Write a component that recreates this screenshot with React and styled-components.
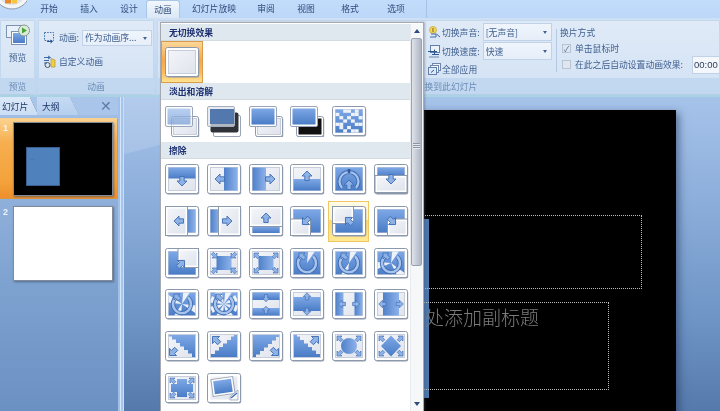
import React from "react";
import styled, { createGlobalStyle } from "styled-components";

const Global = createGlobalStyle`
  html, body { margin: 0; padding: 0; width: 720px; height: 411px; overflow: hidden; background: #8fb0dc; }
  #root { width: 720px; height: 411px; }
  * { box-sizing: border-box; }
`;

const Page = styled.div`
  position: relative; width: 720px; height: 411px; overflow: hidden;
  display: flex; flex-direction: column;
  font-family: "Noto Sans CJK SC", "Liberation Sans", sans-serif;
  font-size: 8.8px; color: #3f5f8f; filter: blur(0.3px); white-space: nowrap;
`;

/* ---------- top tabs ---------- */
const TabBar = styled.div`
  position: relative; height: 18px; flex: none; display: flex; align-items: flex-end;
  padding-left: 31px; background: linear-gradient(#c2dcfb, #bcd7f8);
`;
const TabItem = styled.div`
  height: 18px; width: ${p => p.$w}px; margin-right: ${p => p.$gap || 0}px; display: flex; align-items: center; justify-content: center;
  color: #2f4d7c; padding-bottom: 1px;
  ${p => p.$active && `background: linear-gradient(#f2f7fd, #dbe8f6); border: 1px solid #a9c6e6; border-bottom: 0; border-radius: 3px 3px 0 0;`}
`;
const TabEnd = styled.div`width: 1px; height: 18px; background: #a4c2e6; margin-left: 12px;`;
const OfficeBall = styled.svg`position: absolute; left: 0; top: 0;`;

/* ---------- ribbon ---------- */
const Ribbon = styled.div`
  height: 79px; flex: none; display: flex; gap: 3px; padding: 2px 0 0 0;
  background: linear-gradient(#cfe0f5, #bcd5f0); border-bottom: 2px solid #a9d3e2;
`;
const Group = styled.div`
  width: ${p => p.$w ? p.$w + "px" : "auto"}; flex: ${p => p.$w ? "none" : "1"};
  min-width: 0; display: flex; flex-direction: column; border-radius: 2px; overflow: hidden;
  border: 1px solid #c3d7ee; border-bottom-color: #b5cde8; background: linear-gradient(#e0eaf7, #d2e2f4);
`;
const GroupBody = styled.div`flex: 1; display: flex; min-height: 0;`;
const GroupLabel = styled.div`
  height: 16px; flex: none; display: flex; align-items: center; justify-content: center;
  background: #c2d8f0; color: #6c8cb6; padding-left: ${p => p.$pad || 0}px;
`;
const PreviewButton = styled.div`
  display: flex; flex-direction: column; align-items: center; width: 100%; padding-top: 3px; gap: 3px; color: #3f5f8f;
`;
const AnimColumn = styled.div`display: flex; flex-direction: column; padding: 8px 0 0 4px; gap: 7px;`;
const Row = styled.div`display: flex; align-items: center; gap: ${p => p.$gap || 3}px; height: ${p => p.$h || 17}px;`;
const Select = styled.div`
  width: ${p => p.$w}px; height: ${p => p.$h || 16}px; margin-left: ${p => p.$ml || 0}px; flex: none;
  display: flex; align-items: center; justify-content: space-between;
  padding: 0 4px 0 2px; background: linear-gradient(#f0f5fc, #e6eef9); border: 1px solid #c0d2e8; color: #40608f;
`;
const Caret = styled.span`width: 0; height: 0; border: 2.5px solid transparent; border-top: 3px solid #44628e; margin-top: 3px;`;
const TransitionBody = styled.div`flex: 1; display: flex; padding: 2px 0 0 270px; min-width: 0;`;
const SoundColumn = styled.div`display: flex; flex-direction: column; width: 128px; flex: none; gap: 1px;`;
const WayColumn = styled.div`
  flex: 1; display: flex; flex-direction: column; border-left: 1px solid #b4c9e2; margin: 6px 0 6px 0; padding-left: 3px; min-width: 0;
`;
const WayTitle = styled.div`height: 12px; margin: -3px 0 4px 0; line-height: 13px; color: #3f5f8f;`;
const CheckRow = styled.div`display: flex; align-items: center; gap: 4px; height: 18px; margin-left: 2px; padding-top: ${p => p.$pt || 0}px;`;
const Check = styled.div`
  width: 9px; height: 9px; flex: none; background: #dfe6f0; border: 1px solid #b8c3d2; color: #4f6b96;
  font-size: 8px; line-height: 7px; text-align: center;
`;
const TimeBox = styled.div`
  width: 40px; height: 18px; margin-left: 5px; flex: none; background: #f4f8fd; border: 1px solid #c0d2e8;
  color: #2d3d55; font-family: "Liberation Sans", sans-serif; font-size: 9.5px; display: flex; align-items: center; padding-left: 1px;
`;

/* ---------- workspace ---------- */
const Workspace = styled.div`flex: 1; display: flex; min-height: 0;`;
const SlidePane = styled.div`
  width: 118px; flex: none; background: linear-gradient(#a3c0e6, #7ea2d0 60%, #6b90c2);
`;
const PaneTabs = styled.div`height: 18px; display: flex; align-items: flex-end; background: #a9c5e9; position: relative;`;
const PaneTab = styled.div`
  height: 18px; width: ${p => p.$w}px; margin-right: ${p => p.$gap || 0}px; padding-left: ${p => p.$pad}px; display: flex; align-items: center;
  color: #1d3768;
  background:
    linear-gradient(to top right, transparent calc(50% - .7px), #7f9fc7 50%, transparent calc(50% + .7px)) no-repeat right / 22% 100%,
    ${p => p.$active ? "linear-gradient(#dce9f8,#cbdef4)" : "linear-gradient(#c6daf3,#b5cfee)"};
  clip-path: polygon(0 0, 78% 0, 100% 100%, 0 100%);
`;
const PaneClose = styled.span`position: absolute; right: 6px; top: 1px; font-size: 14px; line-height: 16px; color: #5d7ba6; font-family: "Liberation Sans", sans-serif;`;
const ThumbRow = styled.div`
  display: flex; gap: 5px; padding: ${p => p.$active ? "3px 4px 3px 3px" : "7px 4px 0 3px"}; height: ${p => p.$active ? 81 : 82}px; margin-top: ${p => p.$active ? 3 : 0}px;
  ${p => p.$active && `background: linear-gradient(#fcd28e, #f6ae4e 30%, #f3a23b 80%, #ee8f2c); border: 1px solid #e0963c; border-left: 0; border-top-color:#f9cf8c;`}
`;
const ThumbNo = styled.span`width: 5px; font-size: 9px; font-weight: 700; color: #eef4fc; margin-top: 1px; font-family: "Liberation Sans", sans-serif;`;
const Thumb = styled.div`
  position: relative; width: 100px; height: ${p => p.$h}px; background: ${p => p.$bg};
  border: 1px solid #808a98; box-shadow: 1px 1px 2px rgba(40,60,90,.55);
`;
const ThumbShape = styled.div`
  position: absolute; left: 12px; top: 24px; width: 34px; height: 39px; background: #4f81bd; border: 1px solid #3a5f8e;
  font-size: 5px; line-height: 1; color: #2c4468; padding: 9px 0 0 4px; font-family: "Liberation Sans", sans-serif;
`;
const Splitter = styled.div`
  width: 6px; flex: none; background: linear-gradient(90deg, #9fc0ea 0 2px, #d7e6f8 2px 3px, #a6c5ec 3px 5px, #c9ddf5 5px);
`;
const Stage = styled.div`
  flex: 1; min-width: 0; padding: 13px 0 0 95px; overflow: hidden;
  background:
    linear-gradient(165deg, rgba(255,255,255,.14) 0 12%, rgba(255,255,255,0) 12.2%),
    linear-gradient(#a6c3ea, #8fb0dc 30%, #6e95c6 70%, #5679ab);
`;
const Slide = styled.div`
  position: relative; width: 457px; height: 306px; background: #000; padding-top: 105px;
  box-shadow: 3px 3px 8px rgba(30,50,85,.55);
`;
const TitleBox = styled.div`width: 389px; height: 74px; margin-left: 34px; border: 1px dotted #bdbdbd;`;
const SubBox = styled.div`
  width: 322px; height: 88px; margin: 13px 0 0 68px; border: 1px dotted #bdbdbd; position: relative; padding-top: 1px;
  font-size: 19px; line-height: 26px; font-weight: 300; color: #7b7b7b; text-align: center; letter-spacing: 0;
`;
const SubText = styled.div`margin-left: 11px;`;
const SelectedShape = styled.div`
  position: absolute; left: 55px; top: 109px; width: 155px; height: 179px; background: #4a76ab; z-index: 0;
`;
const SlideLayer = styled.div`position: relative; z-index: 1;`;

/* ---------- gallery ---------- */
const Gallery = styled.div`
  position: absolute; left: 160px; top: 22px; width: 264px; height: 389px; background: #fff; z-index: 5;
  border: 1px solid #a5aab2; border-bottom: 0; display: flex; box-shadow: 1px 0 2px rgba(70,80,100,.4); padding-top: 1px;
`;
const GalleryBody = styled.div`flex: 1; min-width: 0;`;
const SectionHead = styled.div`
  height: 17px; padding-left: 8px; display: flex; align-items: center; background: #dfe8ef; border-bottom: 1px solid #d2dae2;
  font-weight: 700; color: #1c2f70;
`;
const TileGrid = styled.div`display: grid; grid-template-columns: repeat(6, 41.67px); grid-auto-rows: ${p => p.$row || 41.67}px;`;
const TileCell = styled.div`
  display: flex; align-items: center; justify-content: center;
  ${p => p.$mode === "strong" && `background: linear-gradient(#fbd79a, #f7a84a 45%, #fbb95a 75%, #ffe28f); border: 1px solid #d99a4a;`}
  ${p => p.$mode === "soft" && `background: linear-gradient(#fffce8, #fff3c2 45%, #ffd86e 47%, #ffe995); border: 1px solid #efc861;`}
`;
const ScrollBar = styled.div`
  width: 13px; flex: none; display: flex; flex-direction: column; align-items: stretch; background: #f6f7f9; border-left: 1px solid #e8eaee;
  position: relative;
`;
const ScrollArrow = styled.div`
  height: 14px; flex: none; display: flex; align-items: center; justify-content: center;
  &::before { content: ""; width: 0; height: 0; border-left: 3.5px solid transparent; border-right: 3.5px solid transparent;
    ${p => p.$down ? "border-top: 4px solid #2f4c78;" : "border-bottom: 4px solid #2f4c78;"} }
`;
const ScrollThumb = styled.div`
  height: 228px; flex: none; margin: 0 1px 0 0; background: linear-gradient(90deg, #dfe3ea, #c4cad5 55%, #aeb6c4);
  border: 1px solid #9aa3b2; border-radius: 2px; display: flex; align-items: center; justify-content: center; padding-bottom: 12px;
`;
const Grip = styled.div`width: 7px; height: 6px; background: repeating-linear-gradient(#8b95a6 0 1px, #e6e9ef 1px 2px);`;
const Track = styled.div`flex: 1;`;

/* ---------- tile drawing ---------- */
const HiddenDefs = styled.svg`position: absolute; width: 0; height: 0;`;
const TileSvg = styled.svg`display: block; flex: none; margin-left: 2px;`;

const Defs = () => (
  <HiddenDefs aria-hidden="true">
    <defs>
      <linearGradient id="blue" x1="0" y1="0" x2="0" y2="1"><stop offset="0" stopColor="#7ea8e6" /><stop offset="1" stopColor="#4a7cc6" /></linearGradient>
      <linearGradient id="blueH" x1="0" y1="0" x2="1" y2="0"><stop offset="0" stopColor="#4f80c9" /><stop offset="1" stopColor="#8db2ea" /></linearGradient>
      <linearGradient id="pale" x1="0" y1="0" x2="1" y2="1"><stop offset="0" stopColor="#f3f5f9" /><stop offset="1" stopColor="#dfe3ec" /></linearGradient>
      <clipPath id="inner"><rect x="3.5" y="3.5" width="27" height="23" /></clipPath>
    </defs>
  </HiddenDefs>
);

const Frame = ({ x = 0.5, y = 0.5, w = 33, h = 29, fill = "#fff" }) => (
  <>
    <rect x={x + 0.7} y={y + 0.9} width={w} height={h} rx="2" fill="#8b95a8" />
    <rect x={x} y={y} width={w} height={h} rx="2" fill={fill} stroke="#8c98ac" />
  </>
);
const Base = () => (<><Frame /><rect x="3.5" y="3.5" width="27" height="23" fill="url(#pale)" stroke="#c8ced9" /></>);
const B = ({ x, y, w, h, hz }) => <rect x={x} y={y} width={w} height={h} fill={hz ? "url(#blueH)" : "url(#blue)"} />;
const Arrow = ({ x, y, r = 0, s = 1 }) => (
  <path transform={`translate(${x} ${y}) rotate(${r}) scale(${s})`} d="M0-5 L5 0 H2.2 V4.5 H-2.2 V0 H-5Z" fill="#8fb2e6" stroke="#3e6db4" strokeWidth=".9" />
);
const Pn = ({ x, y, w, h }) => (
  <>
    <rect x={x} y={y} width={w} height={h} fill="#fff" stroke="#8c98ac" />
    <rect x={x + 2} y={y + 2} width={w - 4} height={h - 4} fill="url(#pale)" />
  </>
);
const Corners = ({ out }) => {
  const rot = out ? [-45, 45, 135, 225] : [135, 225, -45, 45];
  return (
    <>
      <Arrow x={7.5} y={7.5} r={rot[0]} s=".7" />
      <Arrow x={26.5} y={7.5} r={rot[1]} s=".7" />
      <Arrow x={26.5} y={22.5} r={rot[2]} s=".7" />
      <Arrow x={7.5} y={22.5} r={rot[3]} s=".7" />
    </>
  );
};
const Wheel = ({ n }) => {
  const w = [];
  for (let i = 0; i < n; i++) {
    const a = (i * 360) / n;
    w.push(<path key={i} d="M0 0 L-5 -20 L5 -20Z" fill="#eef2f8" transform={`translate(17 15) rotate(${a + 20}) scale(${n > 4 ? 0.7 : 1.05})`} />);
  }
  return (
    <>
      <Base />
      <g clipPath="url(#inner)">
        <B x={3.5} y={3.5} w={27} h={23} />
        {w}
      </g>
      <path d="M11.5 8 A9 9 0 1 0 23 8.5" fill="none" stroke="#3e6db4" strokeWidth="4.2" />
      <path d="M11.5 8 A9 9 0 1 0 23 8.5" fill="none" stroke="#a9c4ec" strokeWidth="2.4" />
      <Arrow x={12} y={8} r={-45} s=".85" />
    </>
  );
};
const Two = ({ top, bottom }) => (
  <>
    <Frame x={6.5} y={10.5} w={27} h={20} />
    <rect x={8.5} y={12.5} width={23} height={16} fill={bottom === "black" ? "#111" : "url(#pale)"} stroke={bottom === "ghost" ? "#c8ced9" : "none"} />
    <rect x={0.5} y={0.5} width={27} height={20} rx="1.5" fill="#fff" fillOpacity={top === "fade" ? 0.55 : 1} stroke="#9aa5b7" />
    <rect x={2.5} y={2.5} width={23} height={16} fill="url(#blue)" fillOpacity={top === "fade" ? 0.55 : 1} />
  </>
);
const dissolveCells = [
  "0011010", "1000110", "0101001", "0010100", "1100011", "0101000", "0010110",
];
const Dissolve = () => (
  <>
    <Base />
    <B x={3.5} y={3.5} w={27} h={23} />
    {dissolveCells.flatMap((line, r) =>
      line.split("").map((v, c) => v === "1"
        ? <rect key={r + "-" + c} x={3.5 + c * 3.86} y={3.5 + r * 3.29} width="3.86" height="3.29" fill="#eef2f8" />
        : null))}
  </>
);
const Tile = ({ children }) => <TileSvg width="35" height="31" viewBox="0 0 35 31">{children}</TileSvg>;
const Dia = ({ t }) => <path d={t} fill="url(#blue)" />;

const wipeTiles = [
  <><Base /><B x={3.5} y={3.5} w={27} h={11} /><Arrow x={17} y={17} r={180} /></>,
  <><Base /><B x={17} y={3.5} w={13.5} h={23} hz /><Arrow x={13} y={15} r={-90} /></>,
  <><Base /><B x={3.5} y={3.5} w={13.5} h={23} hz /><Arrow x={21} y={15} r={90} /></>,
  <><Base /><B x={3.5} y={15} w={27} h={11.5} /><Arrow x={17} y={12} r={0} /></>,
  <><Base /><B x={3.5} y={3.5} w={27} h={23} /><path d="M10 24 A9.5 9.5 0 1 1 24 24" fill="none" stroke="#3e6db4" strokeWidth="4" /><path d="M10 24 A9.5 9.5 0 1 1 24 24" fill="none" stroke="#a9c4ec" strokeWidth="2.2" /><path d="M17 5 V9" stroke="#3059a0" strokeWidth="2.5" /><Arrow x={17} y={21} s="1" /></>,
  <><Base /><B x={3.5} y={3.5} w={27} h={9} /><Pn x={1} y={11.5} w={32} h={17} /><Arrow x={17} y={15} r={180} /></>,

  <><Base /><B x={20} y={3.5} w={10.5} h={23} hz /><Pn x={0.5} y={0.5} w={22} h={29} /><Arrow x={14} y={15} r={-90} /></>,
  <><Base /><B x={3.5} y={3.5} w={9} h={23} hz /><Pn x={11.5} y={0.5} w={22} h={29} /><Arrow x={20} y={15} r={90} /></>,
  <><Base /><B x={3.5} y={20} w={27} h={7} /><Pn x={0.5} y={0.5} w={33} h={20} /><Arrow x={17} y={12} /></>,
  <><Base /><B x={3.5} y={3.5} w={27} h={23} /><Pn x={0.5} y={13} w={20} h={16.5} /><Arrow x={16} y={15} r={225} /></>,
  <><Base /><B x={3.5} y={3.5} w={27} h={23} /><Pn x={0.5} y={0.5} w={21} h={17} /><Arrow x={17} y={15} r={-45} /></>,
  <><Base /><B x={3.5} y={3.5} w={27} h={23} /><Pn x={13.5} y={13} w={20} h={16.5} /><Arrow x={18} y={15} r={135} /></>,

  <><Base /><B x={3.5} y={3.5} w={27} h={23} /><Pn x={13} y={0.5} w={20.5} h={19} /><Arrow x={16} y={16} r={45} /></>,
  <><Base /><B x={9.5} y={8} w={15} h={14} hz /><Corners /></>,
  <><Base /><B x={9.5} y={8} w={15} h={14} hz /><Corners out /></>,
  <Wheel n={1} />, <Wheel n={2} />, <Wheel n={3} />,

  <Wheel n={4} />, <Wheel n={8} />,
  <><Base /><B x={3.5} y={3.5} w={27} h={7.5} /><B x={3.5} y={19} w={27} h={7.5} /><Arrow x={17} y={9} s=".75" r={180} /><Arrow x={17} y={21} s=".75" /></>,
  <><Base /><B x={3.5} y={8} w={27} h={14} /><Arrow x={17} y={7.5} s=".75" /><Arrow x={17} y={22.5} r={180} s=".75" /></>,
  <><Base /><B x={3.5} y={3.5} w={8} h={23} hz /><B x={22.5} y={3.5} w={8} h={23} hz /><Arrow x={10} y={15} r={-90} s=".75" /><Arrow x={24} y={15} r={90} s=".75" /></>,
  <><Base /><B x={9} y={3.5} w={16} h={23} hz /><Arrow x={8.5} y={15} r={-90} s=".75" /><Arrow x={25.5} y={15} r={90} s=".75" /></>,

  <><Base /><Dia t="M4 4 H30 V26 H27 V22.5 H23 V19 H19 V15.5 H15 V12 H11 V8.5 H7 V5.5 H4Z" /><Arrow x={8} y={21} r={225} /></>,
  <><Base /><Dia t="M30 4 V26 H4 V23 H8 V19.5 H12 V16 H16 V12.5 H20 V9 H24 V5.5 H27 V4Z" /><Arrow x={9} y={9} r={-45} /></>,
  <><Base /><Dia t="M4 4 H30 V6 H27 V9.5 H23 V13 H19 V16.5 H15 V20 H11 V23.5 H7 V26 H4Z" /><Arrow x={26} y={21} r={135} /></>,
  <><Base /><Dia t="M4 4 V26 H30 V23 H26 V19.5 H22 V16 H18 V12.5 H14 V9 H10 V5.5 H7 V4Z" /><Arrow x={25} y={9} r={45} /></>,
  <><Base /><circle cx="17" cy="15" r="8" fill="url(#blueH)" /><Corners out /></>,
  <><Base /><path d="M17 4.5 L27 15 L17 25.5 L7 15Z" fill="url(#blue)" /><Corners out /></>,

  <><Base /><path d="M12 6 H22 V11 H28 V19 H22 V24 H12 V19 H6 V11 H12Z" fill="url(#blue)" /><Corners out /></>,
  <>
    <Frame />
    <rect x="3.5" y="3.5" width="27" height="23" fill="url(#pale)" />
    <rect x="5" y="5" width="22" height="17" fill="#fff" stroke="#9aa5b7" transform="rotate(-8 16 14)" />
    <rect x="7" y="7" width="18" height="13" fill="url(#blue)" transform="rotate(-8 16 14)" />
    <path d="M23 24 L31 17 V27 H23Z" fill="#f4f6fa" stroke="#8c98ac" strokeWidth=".7" />
    <path d="M24 25 L30 20" stroke="#3e6db4" strokeWidth="1.2" />
  </>,
];

const DarkFade = () => (
  <>
    <rect x="6.5" y="9.5" width="27" height="21" rx="1.5" fill="#fff" stroke="#9aa5b7" />
    <rect x="3.5" y="6.5" width="28" height="20" rx="2" fill="#2f3238" />
    <rect x="0.5" y="0.5" width="27" height="20" rx="1.5" fill="#dfe4ec" fillOpacity=".75" stroke="#a5aebc" />
    <rect x="3" y="3" width="24" height="15" fill="#5378ad" />
  </>
);
const fadeTiles = [
  <Two top="fade" bottom="ghost" />,
  <DarkFade />,
  <Two bottom="ghost" />,
  <Two bottom="black" />,
  <Dissolve />,
];

/* ---------- small ribbon icons ---------- */
const PreviewIcon = () => (
  <svg width="24" height="24" viewBox="0 0 24 24">
    <rect x="0.5" y="1.5" width="15" height="12" fill="#eaf1fa" stroke="#7d93b4" />
    <rect x="5.5" y="7.5" width="15" height="13" fill="#fff" stroke="#7d93b4" />
    <rect x="7" y="9" width="12" height="10" fill="url(#blue)" />
    <circle cx="18" cy="6.5" r="5.5" fill="#dceadb" stroke="#7f9a8a" />
    <path d="M16 3.5 L21 6.5 L16 9.5Z" fill="#4aa33a" />
  </svg>
);
const AnimIcon = () => (
  <svg width="13" height="13" viewBox="0 0 13 13">
    <rect x="1.5" y="1.5" width="9" height="8" fill="none" stroke="#3d6aa8" strokeDasharray="1.5 1.2" />
    <path d="M4 10.5 H9 M7.5 9 L9.5 10.5 L7.5 12" fill="none" stroke="#27508e" />
  </svg>
);
const CustomIcon = () => (
  <svg width="13" height="13" viewBox="0 0 13 13">
    <path d="M1 2.5 H7 M5 1 L7.5 2.5 L5 4 M1 5.5 H6 M1 8 H4" stroke="#3d6aa8" fill="none" />
    <circle cx="4.5" cy="10" r="2.5" fill="none" stroke="#555" />
    <path d="M8 3.5 L12 5 V12 H8Z" fill="#f2cf45" stroke="#a98a22" strokeWidth=".6" />
  </svg>
);
const SoundIcon = () => (
  <svg width="13" height="13" viewBox="0 0 13 13">
    <circle cx="5" cy="4" r="3.5" fill="#f5d65c" stroke="#b79a2c" strokeWidth=".6" />
    <path d="M5 2 V6" stroke="#7a6215" />
    <path d="M3 8 H8 V11 M8.5 8 L12 11 M2 11 H8" stroke="#3d6aa8" fill="none" />
  </svg>
);
const SpeedIcon = () => (
  <svg width="13" height="13" viewBox="0 0 13 13">
    <rect x="2.5" y="0.5" width="9" height="7" fill="#eef3fa" stroke="#5f7fae" />
    <path d="M0 6.5 H9 M6.5 4.5 V9 M4 9.5 H11" stroke="#2d568f" fill="none" />
    <path d="M1 12 H11" stroke="#6f86a8" />
  </svg>
);
const ApplyIcon = () => (
  <svg width="13" height="13" viewBox="0 0 13 13">
    <rect x="4.5" y="0.5" width="8" height="7" fill="#eef3fa" stroke="#6f86a8" />
    <rect x="2.5" y="2.5" width="8" height="7" fill="#f7f9fc" stroke="#6f86a8" />
    <rect x="0.5" y="4.5" width="8" height="7" fill="#dfe9f6" stroke="#5f7fae" />
    <path d="M3 9.5 L6 7" stroke="#2d568f" />
  </svg>
);

export default function App() {
  return (
    <Page>
      <Global />
      <Defs />
      <TabBar>
        <OfficeBall width="27" height="11" viewBox="0 0 27 11">
          <circle cx="12" cy="-9" r="18" fill="#f4f5f7" stroke="#8e9aa8" />
          <circle cx="12" cy="-9" r="14" fill="#dfe3e8" />
          <rect x="5" y="-3" width="6" height="6.5" fill="#e88b2d" />
          <rect x="12" y="-3" width="5" height="6.5" fill="#f4c542" />
        </OfficeBall>
        <TabItem $w={36} $gap={4}>开始</TabItem>
        <TabItem $w={36} $gap={4}>插入</TabItem>
        <TabItem $w={36} $gap={-1}>设计</TabItem>
        <TabItem $w={34} $gap={4} $active>动画</TabItem>
        <TabItem $w={60} $gap={4}>幻灯片放映</TabItem>
        <TabItem $w={36} $gap={4}>审阅</TabItem>
        <TabItem $w={36} $gap={8}>视图</TabItem>
        <TabItem $w={36} $gap={10}>格式</TabItem>
        <TabItem $w={36}>选项</TabItem>
        <TabEnd />
      </TabBar>

      <Ribbon>
        <Group $w={35}>
          <GroupBody>
            <PreviewButton>
              <PreviewIcon />
              <span>预览</span>
            </PreviewButton>
          </GroupBody>
          <GroupLabel>预览</GroupLabel>
        </Group>
        <Group $w={116}>
          <GroupBody>
            <AnimColumn>
              <Row>
                <AnimIcon />
                <span>动画:</span>
                <Select $w={70}><span>作为动画序...</span><Caret /></Select>
              </Row>
              <Row><CustomIcon /><span>自定义动画</span></Row>
            </AnimColumn>
          </GroupBody>
          <GroupLabel>动画</GroupLabel>
        </Group>
        <Group>
          <GroupBody>
            <TransitionBody>
              <SoundColumn>
                <Row $h={18} $gap={1}><SoundIcon /><span>切换声音:</span><Select $w={69} $h={18} $ml={2}><span>[无声音]</span><Caret /></Select></Row>
                <Row $h={18} $gap={1}><SpeedIcon /><span>切换速度:</span><Select $w={69} $h={18} $ml={2}><span>快速</span><Caret /></Select></Row>
                <Row $h={18} $gap={1}><ApplyIcon /><span>全部应用</span></Row>
              </SoundColumn>
              <WayColumn>
                <WayTitle>换片方式</WayTitle>
                <CheckRow><Check>✓</Check><span>单击鼠标时</span></CheckRow>
                <CheckRow $pt={1}><Check /><span>在此之后自动设置动画效果:</span><TimeBox>00:00</TimeBox></CheckRow>
              </WayColumn>
            </TransitionBody>
          </GroupBody>
          <GroupLabel $pad={16}>切换到此幻灯片</GroupLabel>
        </Group>
      </Ribbon>

      <Workspace>
        <SlidePane>
          <PaneTabs>
            <PaneTab $active $w={39} $gap={-2} $pad={2}>幻灯片</PaneTab>
            <PaneTab $w={42} $pad={5}>大纲</PaneTab>
            <PaneClose>✕</PaneClose>
          </PaneTabs>
          <ThumbRow $active>
            <ThumbNo>1</ThumbNo>
            <Thumb $h={74} $bg="#000"><ThumbShape>··</ThumbShape></Thumb>
          </ThumbRow>
          <ThumbRow>
            <ThumbNo>2</ThumbNo>
            <Thumb $h={75} $bg="#fff" />
          </ThumbRow>
        </SlidePane>
        <Splitter />
        <Stage>
          <Slide>
            <SelectedShape />
            <SlideLayer>
              <TitleBox />
              <SubBox><SubText>单击此处添加副标题</SubText></SubBox>
            </SlideLayer>
          </Slide>
        </Stage>
      </Workspace>

      <Gallery>
        <GalleryBody>
          <SectionHead>无切换效果</SectionHead>
          <TileGrid $row={42}>
            <TileCell $mode="strong"><Tile><Base /></Tile></TileCell>
          </TileGrid>
          <SectionHead>淡出和溶解</SectionHead>
          <TileGrid $row={42}>
            {fadeTiles.map((t, i) => <TileCell key={i}><Tile>{t}</Tile></TileCell>)}
          </TileGrid>
          <SectionHead>擦除</SectionHead>
          <TileGrid>
            {wipeTiles.map((t, i) => (
              <TileCell key={i} $mode={i === 10 ? "soft" : undefined}><Tile>{t}</Tile></TileCell>
            ))}
          </TileGrid>
        </GalleryBody>
        <ScrollBar>
          <ScrollArrow />
          <ScrollThumb><Grip /></ScrollThumb>
          <Track />
          <ScrollArrow $down />
        </ScrollBar>
      </Gallery>
    </Page>
  );
}
